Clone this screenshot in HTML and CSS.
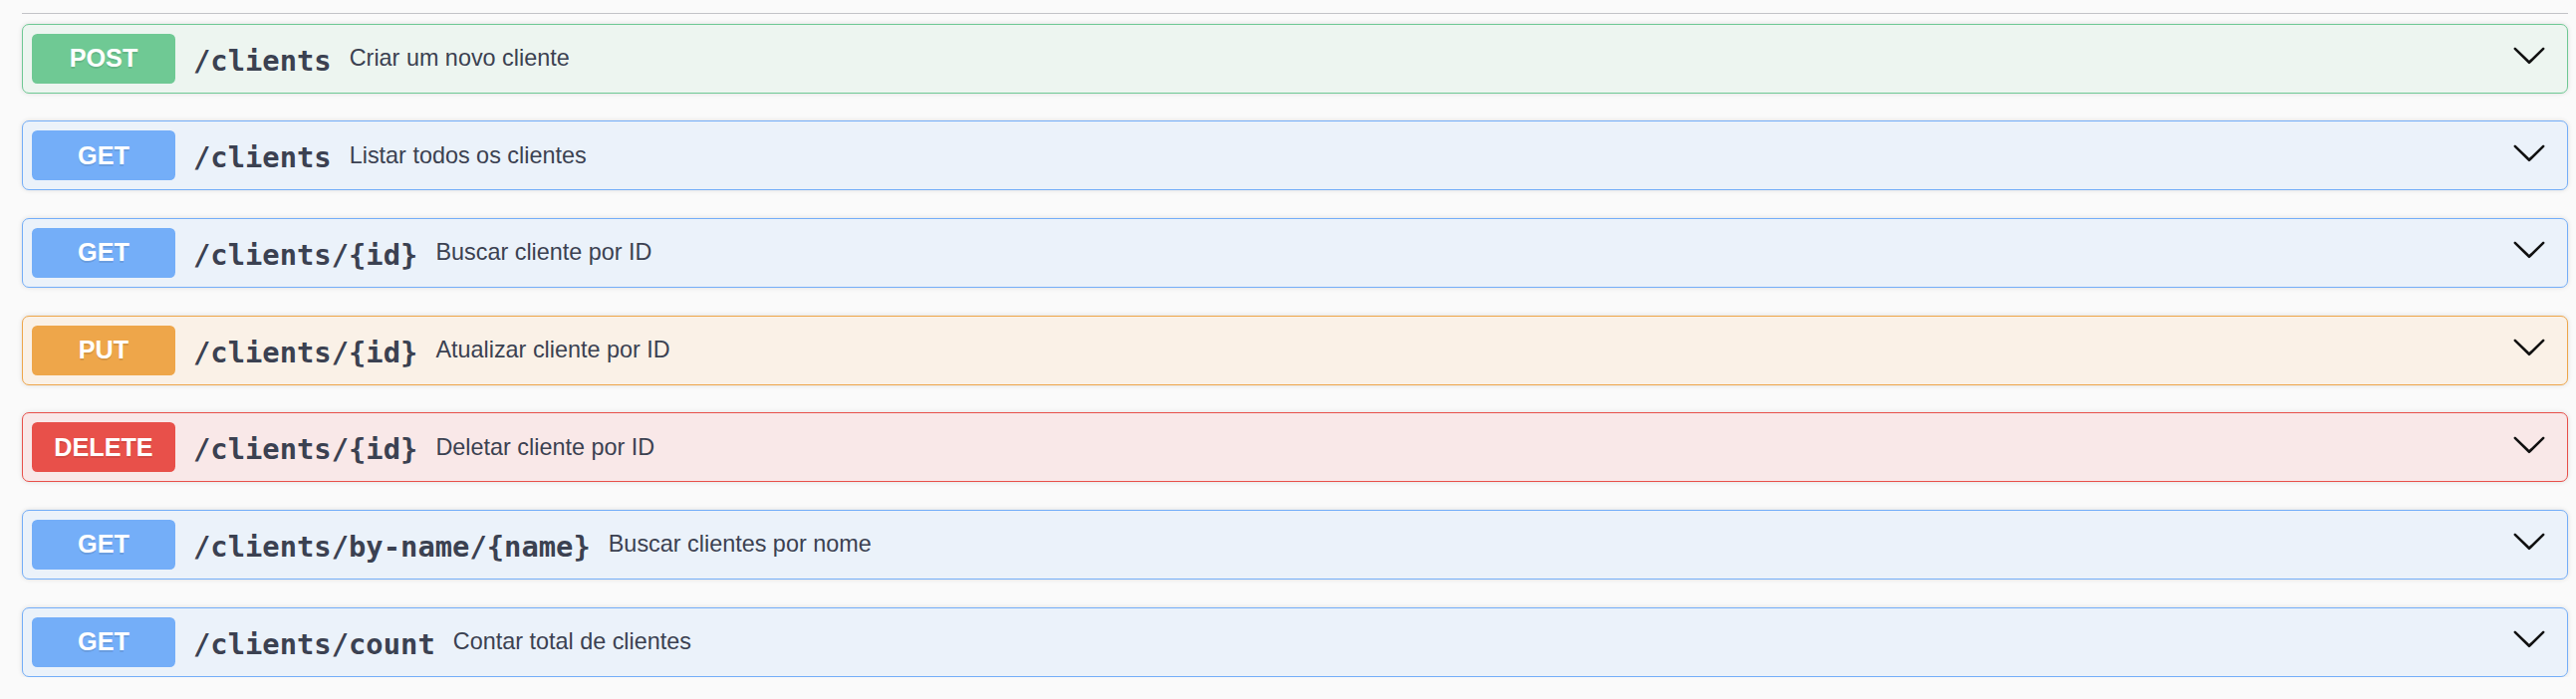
FILE: index.html
```html
<!DOCTYPE html>
<html lang="pt">
<head>
<meta charset="utf-8">
<title>clients</title>
<link rel="stylesheet" href="styles.css">
</head>
<body>
<div class="wrap">
  <div class="tag-line"></div>
  <div class="ops">
    <div class="op op-post">
      <span class="method">POST</span>
      <span class="path">/clients</span>
      <span class="desc">Criar um novo cliente</span>
      <svg class="arrow" viewBox="0 0 20 20" width="36" height="36"><path d="M17.418 6.109c.272-.268.709-.268.979 0s.271.701 0 .969l-7.908 7.83c-.27.268-.707.268-.979 0l-7.908-7.83c-.27-.268-.27-.701 0-.969.271-.268.709-.268.979 0L10 13.25l7.418-7.141z"/></svg>
    </div>
    <div class="op op-get">
      <span class="method">GET</span>
      <span class="path">/clients</span>
      <span class="desc">Listar todos os clientes</span>
      <svg class="arrow" viewBox="0 0 20 20" width="36" height="36"><path d="M17.418 6.109c.272-.268.709-.268.979 0s.271.701 0 .969l-7.908 7.83c-.27.268-.707.268-.979 0l-7.908-7.830c-.27-.268-.27-.701 0-.969.271-.268.709-.268.979 0L10 13.25l7.418-7.141z"/></svg>
    </div>
    <div class="op op-get">
      <span class="method">GET</span>
      <span class="path">/clients/{id}</span>
      <span class="desc">Buscar cliente por ID</span>
      <svg class="arrow" viewBox="0 0 20 20" width="36" height="36"><path d="M17.418 6.109c.272-.268.709-.268.979 0s.271.701 0 .969l-7.908 7.83c-.27.268-.707.268-.979 0l-7.908-7.83c-.27-.268-.27-.701 0-.969.271-.268.709-.268.979 0L10 13.25l7.418-7.141z"/></svg>
    </div>
    <div class="op op-put">
      <span class="method">PUT</span>
      <span class="path">/clients/{id}</span>
      <span class="desc">Atualizar cliente por ID</span>
      <svg class="arrow" viewBox="0 0 20 20" width="36" height="36"><path d="M17.418 6.109c.272-.268.709-.268.979 0s.271.701 0 .969l-7.908 7.83c-.27.268-.707.268-.979 0l-7.908-7.83c-.27-.268-.27-.701 0-.969.271-.268.709-.268.979 0L10 13.25l7.418-7.141z"/></svg>
    </div>
    <div class="op op-delete">
      <span class="method">DELETE</span>
      <span class="path">/clients/{id}</span>
      <span class="desc">Deletar cliente por ID</span>
      <svg class="arrow" viewBox="0 0 20 20" width="36" height="36"><path d="M17.418 6.109c.272-.268.709-.268.979 0s.271.701 0 .969l-7.908 7.83c-.27.268-.707.268-.979 0l-7.908-7.83c-.27-.268-.27-.701 0-.969.271-.268.709-.268.979 0L10 13.25l7.418-7.141z"/></svg>
    </div>
    <div class="op op-get">
      <span class="method">GET</span>
      <span class="path">/clients/by-name/{name}</span>
      <span class="desc">Buscar clientes por nome</span>
      <svg class="arrow" viewBox="0 0 20 20" width="36" height="36"><path d="M17.418 6.109c.272-.268.709-.268.979 0s.271.701 0 .969l-7.908 7.83c-.27.268-.707.268-.979 0l-7.908-7.83c-.27-.268-.27-.701 0-.969.271-.268.709-.268.979 0L10 13.25l7.418-7.141z"/></svg>
    </div>
    <div class="op op-get">
      <span class="method">GET</span>
      <span class="path">/clients/count</span>
      <span class="desc">Contar total de clientes</span>
      <svg class="arrow" viewBox="0 0 20 20" width="36" height="36"><path d="M17.418 6.109c.272-.268.709-.268.979 0s.271.701 0 .969l-7.908 7.83c-.27.268-.707.268-.979 0l-7.908-7.83c-.27-.268-.27-.701 0-.969.271-.268.709-.268.979 0L10 13.25l7.418-7.141z"/></svg>
    </div>
  </div>
</div>
</body>
</html>
```

FILE: styles.css
```css
html, body {
  margin: 0;
  padding: 0;
  background: #fafafa;
}

body {
  font-family: "Liberation Sans", Arial, sans-serif;
  color: #3b4151;
}

.wrap {
  padding: 13px 8px 0 22px;
}

.tag-line {
  height: 1px;
  background: #c3c4c8;
}

.ops {
  margin-top: 9.5px;
  display: flex;
  flex-direction: column;
  gap: 27.7px;
}

.op {
  box-sizing: border-box;
  height: 70px;
  display: flex;
  align-items: center;
  padding: 0 20px 0 9px;
  border: 1px solid;
  border-radius: 7px;
  box-shadow: 0 0 5px rgba(0, 0, 0, 0.12);
}

.method {
  box-sizing: border-box;
  width: 144px;
  height: 50px;
  flex: 0 0 auto;
  display: flex;
  align-items: center;
  justify-content: center;
  border-radius: 5.4px;
  color: #fff;
  font-family: "Liberation Sans", Arial, sans-serif;
  font-weight: 700;
  font-size: 25.2px;
  text-shadow: 0 1.8px 0 rgba(0, 0, 0, 0.1);
}

.path {
  padding: 4px 18px 0 18px;
  font-family: "DejaVu Sans Mono", monospace;
  font-weight: 700;
  font-size: 28.8px;
  color: #3b4151;
  white-space: nowrap;
}

.desc {
  flex: 1 1 auto;
  font-family: "Liberation Sans", Arial, sans-serif;
  font-size: 23.4px;
  color: #3b4151;
}

.arrow {
  flex: 0 0 auto;
  margin-bottom: 7px;
  fill: #111;
}

.op-post { background: #edf5f0; border-color: #6fc994; }
.op-post .method { background: #6fc994; }

.op-get { background: #ebf2fa; border-color: #74aef8; }
.op-get .method { background: #74aef8; }

.op-put { background: #faf1e7; border-color: #eea64a; }
.op-put .method { background: #eea64a; }

.op-delete { background: #f9e8e8; border-color: #e8504a; }
.op-delete .method { background: #e8504a; }
```
